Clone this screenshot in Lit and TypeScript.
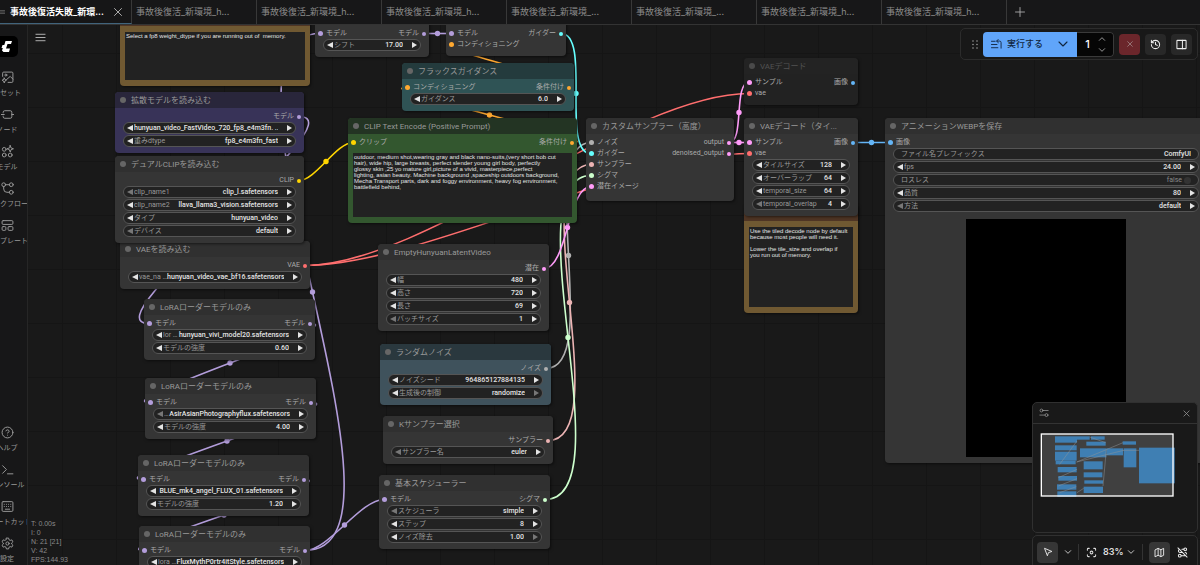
import { LitElement, html, css, svg, nothing } from "lit";
import { classMap } from "lit/directives/class-map.js";
import { styleMap } from "lit/directives/style-map.js";

type Kind = "combo" | "number" | "text" | "toggle";
interface Slot { label: string; color: string }
interface Widget {
  label: string;
  value: string;
  kind: Kind;
  name?: string;
  atMin?: boolean;
  atMax?: boolean;
}
interface GraphNode {
  id: string;
  title: string;
  x: number;
  y: number;
  w: number;
  theme?: string;
  inputs?: Slot[];
  outputs?: Slot[];
  widgets?: Widget[];
  text?: string;
  textHeight?: number;
  preview?: boolean;
  roomy?: boolean;
}

const C = {
  model: "#b39ddb",
  clip: "#ffd500",
  vae: "#ff6e6e",
  cond: "#ffa931",
  latent: "#ff9cf9",
  image: "#64b5f6",
  guider: "#66ffff",
  noise: "#b0b0b0",
  sampler: "#ecb4b4",
  sigmas: "#cdffcd",
};

const TITLE_H = 16;
const BODY_PAD = 3;
const SLOT_H = 11;

const combo = (label: string, value: string, extra: Partial<Widget> = {}): Widget => ({ label, value, kind: "combo", ...extra });
const num = (label: string, value: string, extra: Partial<Widget> = {}): Widget => ({ label, value, kind: "number", ...extra });
const s = (label: string, color: string): Slot => ({ label, color });

const lora = (id: string, x: number, y: number, w: number, file: Widget, strength: string): GraphNode => ({
  id, x, y, w,
  title: "LoRAローダーモデルのみ",
  inputs: [s("モデル", C.model)],
  outputs: [s("モデル", C.model)],
  widgets: [file, num("モデルの強度", strength)],
});

const NODES: GraphNode[] = [
  {
    id: "note1", title: "Note", x: 120, y: 10, w: 190, theme: "brown", textHeight: 48,
    text: "Select a fp8 weight_dtype if you are running out of  memory.",
  },
  {
    id: "unet", title: "拡散モデルを読み込む", x: 115, y: 92, w: 189, theme: "purple",
    outputs: [s("モデル", C.model)],
    widgets: [
      combo("", "hunyuan_video_FastVideo_720_fp8_e4m3fn. ...", { name: "unet_name" }),
      combo("重みdtype", "fp8_e4m3fn_fast"),
    ],
  },
  {
    id: "vae", title: "VAEを読み込む", x: 120, y: 241, w: 190,
    outputs: [s("VAE", C.vae)],
    widgets: [combo("vae_na …", "hunyuan_video_vae_bf16.safetensors")],
  },
  {
    id: "clip", title: "デュアルCLIPを読み込む", x: 115, y: 156, w: 189,
    outputs: [s("CLIP", C.clip)],
    widgets: [
      combo("clip_name1", "clip_l.safetensors", { atMin: true }),
      combo("clip_name2", "llava_llama3_vision.safetensors"),
      combo("タイプ", "hunyuan_video"),
      combo("デバイス", "default", { atMin: true }),
    ],
  },
  lora("lora1", 144, 299, 171, combo("lor …", "hunyuan_vivi_model20.safetensors"), "0.60"),
  lora("lora2", 145, 378, 171, combo("…", "AsirAsianPhotographyflux.safetensors", { atMin: true }), "4.00"),
  lora("lora3", 138, 455, 171, combo("", "BLUE_mk4_angel_FLUX_01.safetensors", { name: "lora_name" }), "1.20"),
  lora("lora4", 139, 526, 171, combo("lora …", "FluxMythP0rtr4itStyle.safetensors"), "1.00"),
  {
    id: "shift", title: "モデルサンプリングSD3", x: 315, y: 9, w: 114,
    inputs: [s("モデル", C.model)],
    outputs: [s("モデル", C.model)],
    widgets: [num("シフト", "17.00")],
  },
  {
    id: "guider", title: "基本ガイダー", x: 446, y: 9, w: 120,
    inputs: [s("モデル", C.model), s("コンディショニング", C.cond)],
    outputs: [s("ガイダー", C.guider)],
  },
  {
    id: "flux", title: "フラックスガイダンス", x: 402, y: 63, w: 172, theme: "teal",
    inputs: [s("コンディショニング", C.cond)],
    outputs: [s("条件付け", C.cond)],
    widgets: [num("ガイダンス", "6.0")],
  },
  {
    id: "prompt", title: "CLIP Text Encode (Positive Prompt)", x: 348, y: 118, w: 229, theme: "green", textHeight: 64,
    inputs: [s("クリップ", C.clip)],
    outputs: [s("条件付け", C.cond)],
    text:
      "outdoor, medium shot,wearing gray and black nano-suits,(very short bob cut\n" +
      "hair), wide hip, large breasts, perfect slender young girl body, perfectly\n" +
      "glossy skin ,25 yo mature girl,picture of a vivid, masterpiece,perfect\n" +
      "lighting, asian beauty. Machine background ,spaceship outdoors background,\n" +
      "Mecha Transport parts, dark and foggy environment, heavy fog environment,\n" +
      "battlefield behind,",
  },
  {
    id: "empty", title: "EmptyHunyuanLatentVideo", x: 378, y: 244, w: 171,
    outputs: [s("潜在", C.latent)],
    widgets: [num("幅", "480"), num("高さ", "720"), num("長さ", "69"), num("バッチサイズ", "1", { atMin: true })],
  },
  {
    id: "noise", title: "ランダムノイズ", x: 380, y: 344, w: 171, theme: "blue",
    outputs: [s("ノイズ", C.noise)],
    widgets: [num("ノイズシード", "964865127884135"), combo("生成後の制御", "randomize", { atMax: true })],
  },
  {
    id: "ksampler", title: "Kサンプラー選択", x: 383, y: 416, w: 170,
    outputs: [s("サンプラー", C.sampler)],
    widgets: [combo("サンプラー名", "euler", { atMin: true })],
  },
  {
    id: "sched", title: "基本スケジューラー", x: 379, y: 475, w: 171,
    inputs: [s("モデル", C.model)],
    outputs: [s("シグマ", C.sigmas)],
    widgets: [combo("スケジューラ", "simple", { atMin: true }), num("ステップ", "8"), num("ノイズ除去", "1.00", { atMax: true })],
  },
  {
    id: "custom", title: "カスタムサンプラー（高度）", x: 586, y: 118, w: 148, roomy: true,
    inputs: [s("ノイズ", C.noise), s("ガイダー", C.guider), s("サンプラー", C.sampler), s("シグマ", C.sigmas), s("潜在イメージ", C.latent)],
    outputs: [s("output", C.latent), s("denoised_output", C.latent)],
  },
  {
    id: "decode", title: "VAEデコード", x: 744, y: 58, w: 114, theme: "muted",
    inputs: [s("サンプル", C.latent), s("vae", C.vae)],
    outputs: [s("画像", C.image)],
  },
  {
    id: "note2", title: "Note", x: 744, y: 205, w: 114, theme: "brown", textHeight: 80,
    text: "Use the tiled decode node by default\nbecause most people will need it.\n\nLower the tile_size and overlap if\nyou run out of memory.",
  },
  {
    id: "tiled", title: "VAEデコード（タイ...", x: 744, y: 118, w: 114,
    inputs: [s("サンプル", C.latent), s("vae", C.vae)],
    outputs: [s("画像", C.image)],
    widgets: [num("タイルサイズ", "128"), num("オーバーラップ", "64"), num("temporal_size", "64"), num("temporal_overlap", "4", { atMin: true })],
  },
  {
    id: "webp", title: "アニメーションWEBPを保存", x: 885, y: 118, w: 322, preview: true,
    inputs: [s("画像", C.image)],
    widgets: [
      { kind: "text", label: "ファイル名プレフィックス", value: "ComfyUI" },
      num("fps", "24.00"),
      { kind: "toggle", label: "ロスレス", value: "false" },
      num("品質", "80"),
      combo("方法", "default", { atMin: true }),
    ],
  },
];

const LINKS: [string, number, string, number, string][] = [
  ["unet", 0, "lora1", 0, C.model],
  ["lora1", 0, "lora2", 0, C.model],
  ["lora2", 0, "lora3", 0, C.model],
  ["lora3", 0, "lora4", 0, C.model],
  ["lora4", 0, "shift", 0, C.model],
  ["lora4", 0, "sched", 0, C.model],
  ["shift", 0, "guider", 0, C.model],
  ["clip", 0, "prompt", 0, C.clip],
  ["vae", 0, "decode", 1, C.vae],
  ["vae", 0, "tiled", 1, C.vae],
  ["prompt", 0, "flux", 0, C.cond],
  ["flux", 0, "guider", 1, C.cond],
  ["noise", 0, "custom", 0, C.noise],
  ["ksampler", 0, "custom", 2, C.sampler],
  ["sched", 0, "custom", 3, C.sigmas],
  ["empty", 0, "custom", 4, C.latent],
  ["guider", 0, "custom", 1, C.guider],
  ["custom", 0, "decode", 0, C.latent],
  ["custom", 0, "tiled", 0, C.latent],
  ["tiled", 0, "webp", 0, C.image],
];

const byId = new Map(NODES.map((n) => [n.id, n]));
const slotY = (n: GraphNode, i: number) => n.y + TITLE_H + BODY_PAD + SLOT_H * (i + 0.5);

const icon = (size: number, body: unknown, width = 2) => html`<svg
  width=${size} height=${size} viewBox="0 0 24 24" fill="none" stroke="currentColor"
  stroke-width=${width} stroke-linecap="round" stroke-linejoin="round" aria-hidden="true">${body}</svg>`;

const I = {
  close: svg`<path d="M5 5l14 14M19 5L5 19"/>`,
  plus: svg`<path d="M12 3v18M3 12h18"/>`,
  menu: svg`<path d="M2 5h20M2 12h20M2 19h20"/>`,
  assets: svg`<path d="M3 10V4a2 2 0 0 1 2-2h15a2 2 0 0 1 2 2v15a2 2 0 0 1-2 2h-7"/><path d="M22 15l-5-5-7 6"/><circle cx="9" cy="7.500" r="1.800"/><path d="M6 13l1.300 2.700L10 17l-2.700 1.300L6 22l-1.300-3.700L2 17l2.700-1.300z"/>`,
  node: svg`<path d="M4 9V8a3 3 0 0 1 3-3h10a3 3 0 0 1 3 3v8a3 3 0 0 1-3 3H7a3 3 0 0 1-3-3v-1"/><path d="M0 12h6M20 12h4"/>`,
  model: svg`<circle cx="6" cy="8" r="3.500"/><circle cx="6" cy="18.500" r="3.500"/><circle cx="17" cy="18.500" r="3.500"/><path d="M17 1l1.600 4.400L23 7l-4.400 1.600L17 13l-1.600-4.400L11 7l4.400-1.600z"/>`,
  workflow: svg`<circle cx="5" cy="5" r="3.500"/><circle cx="19" cy="5" r="3.500"/><circle cx="19" cy="19" r="3.500"/><path d="M5 8.500V13a6 6 0 0 0 6 6h4.500M8.500 5h7"/>`,
  template: svg`<rect x="2" y="3" width="20" height="7" rx="2"/><rect x="2" y="14" width="7" height="7" rx="2"/><rect x="13" y="14" width="9" height="7" rx="2"/>`,
  help: svg`<circle cx="12" cy="12" r="10"/><path d="M9.090 9a3 3 0 0 1 5.830 1c0 2-3 3-3 3M12 17h.01"/>`,
  console: svg`<path d="M3 5l7 7-7 7M12 20h10"/>`,
  keyboard: svg`<rect x="2" y="3" width="20" height="18" rx="2"/><path d="M6 8h.1M10 8h.1M14 8h.1M18 8h.1M6 12h.1M10 12h.1M14 12h.1M18 12h.1M8 17h8"/>`,
  gear: svg`<path d="M10 2h4l.7 3 2.300 1.300 3-1 2 3.500L19.700 11v2l2.300 2.200-2 3.500-3-1-2.300 1.300-.7 3h-4l-.7-3L7 17.700l-3 1-2-3.500L4.300 13v-2L2 8.800l2-3.500 3 1L9.300 5z"/><circle cx="12" cy="12" r="3"/>`,
  run: svg`<path d="M1 5h8M1 12h12M1 19h14M16 8l-4-3.500L16 1M22 20V8a3.500 3.500 0 0 0-3.500-3.500H13"/>`,
  down: svg`<path d="M4 8l8 8 8-8"/>`,
  up: svg`<path d="M4 16l8-8 8 8"/>`,
  history: svg`<path d="M3 12a9 9 0 1 0 9-9 9.750 9.750 0 0 0-6.740 2.740L3 8M3 3v5h5M12 7v5l4 2"/>`,
  panel: svg`<rect x="2" y="3" width="20" height="18" rx="1"/><path d="M14 3v18"/>`,
  cursor: svg`<path d="M4 4l6.500 17 2.500-7.500L20.500 11z"/>`,
  focus: svg`<path d="M3 7V5a2 2 0 0 1 2-2h2M17 3h2a2 2 0 0 1 2 2v2M21 17v2a2 2 0 0 1-2 2h-2M7 21H5a2 2 0 0 1-2-2v-2"/><circle cx="12" cy="12" r="3"/>`,
  map: svg`<path d="M3 6l6-3 6 3 6-3v15l-6 3-6-3-6 3zM9 3v15M15 6v15"/>`,
  hidden: svg`<circle cx="6" cy="19" r="3"/><path d="M9 19h8.500c.4 0 .9-.1 1.300-.2M5.200 5.200A3.500 3.530 0 0 0 6.500 12H12M2 2l20 20M21 15.300a3.500 3.500 0 0 0-3.300-3.300M15 5h-4.300"/><circle cx="18" cy="5" r="3"/>`,
  options: svg`<circle cx="6" cy="6" r="3.500"/><path d="M10 6h12M2 17h12"/><circle cx="18" cy="17" r="3.500"/>`,
};

class GraphNodeView extends LitElement {
  static properties = { node: { attribute: false } };
  declare node: GraphNode;

  static styles = css`
    :host {
      display: block;
      --head: #303030;
      --body: #353535;
    }
    .card {
      border-radius: 4px;
      background: var(--body);
      box-shadow: 1px 1px 3px #0008;
      color: #aaa;
      font: 7px/11px Roboto, "Noto Sans CJK JP", sans-serif;
      overflow: hidden;
    }
    .purple { --head: #29263b; --body: #383358; }
    .brown { --head: #4f3524; --body: #705932; }
    .teal { --head: #243b3d; --body: #2f5355; }
    .green { --head: #233423; --body: #33572f; }
    .blue { --head: #2a383e; --body: #3f525c; }
    .muted { --head: #232323; --body: #222; }
    .head {
      display: flex;
      align-items: center;
      gap: 5px;
      height: 16px;
      padding-left: 5px;
      background: var(--head);
      color: #999;
      font-size: 8px;
      white-space: nowrap;
    }
    .muted .head { color: #525252; }
    .bulb { width: 6px; height: 6px; border-radius: 50%; background: #666; flex: none; }
    .muted .bulb { background: #4a4a4a; }
    .body { padding: 3px 0 6px; }
    .slots { display: flex; justify-content: space-between; }
    .slot { display: flex; align-items: center; gap: 3px; height: 11px; white-space: nowrap; }
    .in { padding-left: 3px; }
    .out { padding-right: 3px; justify-content: flex-end; }
    .dot { width: 5px; height: 5px; border-radius: 50%; flex: none; }
    .out .dot { width: 4px; height: 4px; }
    .widgets { display: grid; gap: 1px; padding: 0 8px; }
    .widget {
      display: flex;
      align-items: center;
      box-sizing: border-box;
      height: 12px;
      padding: 0 3px;
      border: 1px solid #555;
      border-radius: 6px;
      background: #222;
    }
    .plain { padding: 0 7px; }
    .field { display: flex; align-items: center; flex: 1; min-width: 0; padding: 0 9px 0 1px; }
    .plain .field { padding: 0; gap: 2px; }
    .name { color: #999; white-space: nowrap; flex: none; }
    input, select {
      flex: 1;
      min-width: 0;
      width: 0;
      height: 10px;
      margin: 0;
      padding: 0;
      border: 0;
      background: none;
      color: #e4e4e4;
      font: 500 7px/10px Roboto, "Noto Sans CJK JP", sans-serif;
      text-align: right;
      text-align-last: right;
      appearance: none;
      outline: none;
    }
    .state { flex: 1; text-align: right; color: #888; }
    .tick { flex: none; width: 7px; height: 7px; border-radius: 50%; background: #333; }
    .step { display: flex; flex: none; padding: 0; border: 0; background: none; color: #e4e4e4; }
    .step:disabled { color: #777; }
    .note { padding: 5px 5px 0; }
    .body.only { padding: 6px 0; }
    .only .note { padding: 0 5px; }
    textarea {
      display: block;
      box-sizing: border-box;
      width: 100%;
      margin: 0;
      padding: 1px;
      border: 0;
      resize: none;
      overflow: hidden;
      background: #222;
      color: #e4e4e4;
      font: 6px/6px "Liberation Sans", Arial, sans-serif;
      white-space: pre;
      outline: none;
    }
    .preview { display: grid; justify-content: center; padding-top: 7px; }
    .frame { width: 160px; height: 238px; background: #000; }
    .roomy { padding-bottom: 9px; }
  `;

  private widget(w: Widget, i: number) {
    const id = `w${i}`;
    const name = w.label ? html`<label class="name" for=${id}>${w.label}</label>` : nothing;
    if (w.kind === "text") {
      return html`<div class="widget plain"><div class="field">${name}<input id=${id} type="text" .value=${w.value} /></div></div>`;
    }
    if (w.kind === "toggle") {
      return html`<div class="widget plain"><div class="field">${name}<span class="state">${w.value}</span><input id=${id} class="tick" type="checkbox" /></div></div>`;
    }
    const control = w.kind === "combo"
      ? html`<select id=${id} aria-label=${w.name ?? w.label}><option>${w.value}</option></select>`
      : html`<input id=${id} type="text" inputmode="decimal" .value=${w.value} />`;
    return html`<div class="widget">
      <button class="step" ?disabled=${w.atMin} aria-label="前へ"><svg width="6" height="6" viewBox="0 0 6 6"><path d="M6 0v6L0 3z" fill="currentColor"/></svg></button>
      <div class="field">${name}${control}</div>
      <button class="step" ?disabled=${w.atMax} aria-label="次へ"><svg width="5" height="6" viewBox="0 0 5 6"><path d="M0 0v6l5-3z" fill="currentColor"/></svg></button>
    </div>`;
  }

  render() {
    const n = this.node;
    const only = !n.inputs && !n.outputs;
    return html`<article class="card ${n.theme ?? ""}">
      <header class="head"><span class="bulb"></span>${n.title}</header>
      <div class=${classMap({ body: true, only, roomy: !!n.roomy })}>
        ${only ? nothing : html`<div class="slots">
          <div>${(n.inputs ?? []).map((p) => html`<div class="slot in"><span class="dot" style=${styleMap({ background: p.color })}></span>${p.label}</div>`)}</div>
          <div>${(n.outputs ?? []).map((p) => html`<div class="slot out">${p.label}<span class="dot" style=${styleMap({ background: p.color })}></span></div>`)}</div>
        </div>`}
        ${n.widgets ? html`<div class="widgets">${n.widgets.map((w, i) => this.widget(w, i))}</div>` : nothing}
        ${n.text ? html`<div class="note"><textarea aria-label=${n.title} spellcheck="false" style=${styleMap({ height: `${n.textHeight}px` })} .value=${n.text}></textarea></div>` : nothing}
        ${n.preview ? html`<div class="preview"><div class="frame"></div></div>` : nothing}
      </div>
    </article>`;
  }
}
customElements.define("graph-node", GraphNodeView);

const TABS = [
  "事故後復活失敗_新環...",
  "事故後復活_新環境_h...",
  "事故後復活_新環境_h...",
  "事故後復活_新環境_h...",
  "事故後復活_新環境_...",
  "事故後復活_新環境_...",
  "事故後復活_新環境_h...",
  "事故後復活_新環境_h...",
];

const SIDE_TOP: [unknown, string][] = [
  [I.assets, "アセット"], [I.node, "ノード"], [I.model, "モデル"], [I.workflow, "ワークフロー"], [I.template, "テンプレート"],
];
const SIDE_BOTTOM: [unknown, string][] = [
  [I.help, "ヘルプ"], [I.console, "コンソール"], [I.keyboard, "ショートカット"], [I.gear, "設定"],
];

const MAP_RECTS = [
  [166, 141, 66, 19], [232, 141, 38, 10], [274, 141, 41, 10], [260, 157, 58, 12], [166, 168, 65, 15],
  [166, 187, 65, 27], [168, 214, 60, 11], [241, 177, 79, 27], [320, 177, 50, 21], [369, 156, 40, 10],
  [372, 177, 38, 57], [418, 175, 107, 107], [174, 233, 57, 16], [176, 260, 56, 14], [172, 285, 58, 16],
  [173, 306, 57, 16], [252, 216, 57, 24], [252, 249, 56, 15], [254, 273, 56, 10], [252, 292, 58, 19],
];

class AppRoot extends LitElement {
  static styles = css`
    :host {
      display: block;
      position: relative;
      height: 100vh;
      overflow: hidden;
      background: #191919;
      color: #bbb;
      font: 9px/14px Inter, "Noto Sans CJK JP", sans-serif;
    }
    button { padding: 0; border: 0; background: none; color: inherit; font: inherit; display: grid; place-items: center; }
    svg { display: block; }
    .canvas {
      position: absolute;
      inset: 0;
      overflow: hidden;
      background-image: linear-gradient(#151515 1px, transparent 1px), linear-gradient(90deg, #151515 1px, transparent 1px);
      background-size: 54px 54px;
      background-position: 8px 53px;
    }
    .links { position: absolute; inset: 0; width: 100%; height: 100%; }
    graph-node { position: absolute; }
    .shell { position: relative; display: flex; flex-direction: column; height: 100%; pointer-events: none; }
    .shell button, .shell input, .shell a { pointer-events: auto; }

    .tabs { display: flex; flex: none; height: 24px; background: #171718; border-bottom: 1px solid #333; overflow: hidden; }
    .tab {
      display: flex;
      align-items: center;
      justify-content: space-between;
      box-sizing: border-box;
      flex: none;
      width: 125px;
      height: 24px;
      padding: 0 4px;
      border-right: 1px solid #383838;
      color: #8a8a8a;
      white-space: nowrap;
    }
    .tab a { color: inherit; text-decoration: none; }
    .active { width: 132px; padding: 0 7px 0 0; background: #161617; border-bottom: 1px solid #41647c; color: #fff; font-weight: 600; }
    .active button { color: #bbb; }
    .lead { flex: none; width: 10px; overflow: hidden; color: #aaa; display: flex; justify-content: flex-end; padding-right: 5px; box-sizing: border-box; }
    .active a { flex: 1; }
    .add { width: 26px; color: #aaa; }

    .main { display: flex; flex: 1; min-height: 0; }
    .side {
      display: flex;
      flex-direction: column;
      justify-content: space-between;
      box-sizing: border-box;
      flex: none;
      width: 28px;
      padding-top: 11px;
      background: #171718;
      border-right: 1px solid #262626;
      overflow: hidden;
      color: #999;
    }
    .group { display: grid; grid-template-columns: minmax(0, 1fr); margin-left: -13px; }
    .bottom { margin-bottom: -3px; }
    .logo { width: 31px; height: 21px; margin-bottom: 8px; border-radius: 5px; background: #000; display: flex; justify-content: flex-end; align-items: center; box-sizing: border-box; padding-right: 5px; }
    .item { display: flex; flex-direction: column; align-items: center; justify-content: center; gap: 5px; height: 37px; font-size: 7px; line-height: 8px; white-space: nowrap; }

    .stage { flex: 1; display: flex; justify-content: space-between; min-width: 0; }
    .left { display: flex; flex-direction: column; justify-content: space-between; align-items: flex-start; }
    .burger { margin: 7px 0 0 7px; color: #bbb; }
    .stats { margin: 0 0 0 3px; padding-bottom: 1px; color: #8a8a8a; font: 7px/9px "Liberation Sans", Arial, sans-serif; }
    .right { display: flex; flex-direction: column; justify-content: space-between; align-items: flex-end; padding: 3px 2px 0 0; }
    .bar {
      display: flex;
      align-items: center;
      gap: 5px;
      box-sizing: border-box;
      height: 32px;
      padding: 0 5px 0 11px;
      border: 1px solid #2c2c2c;
      border-radius: 5px;
      background: #181818;
    }
    .queue { display: flex; height: 25px; border-radius: 4px; overflow: hidden; }
    .run { display: flex; align-items: center; gap: 5px; padding: 0 6px 0 8px; background: #60a5fa; color: #10263f; font-weight: 500; }
    .more { width: 28px; background: #60a5fa; color: #10263f; }
    .count { display: flex; align-items: center; box-sizing: border-box; width: 37px; border: 1px solid #3a3a3a; border-left: 0; border-radius: 0 4px 4px 0; background: #060606; }
    .count input { width: 21px; padding: 0; border: 0; background: none; color: #fff; font: 500 11px/14px Inter, sans-serif; text-align: center; outline: none; }
    .spin { display: grid; gap: 3px; color: #bbb; }
    .sq { width: 21px; height: 21px; border-radius: 4px; background: #282828; color: #eee; }
    .stop { background: #6b262b; color: #a99; }
    .pair { display: flex; gap: 2px; }

    .map { box-sizing: border-box; width: 166px; margin-bottom: 2px; border: 1px solid #303030; border-radius: 5px; background: #191919; overflow: hidden; color: #999; }
    .maphead { display: flex; justify-content: space-between; align-items: center; height: 20px; padding: 0 6px; border-bottom: 1px solid #333; }
    .tools { display: flex; align-items: center; justify-content: space-between; box-sizing: border-box; width: 166px; height: 34px; margin-bottom: -4px; padding: 0 4px; border: 1px solid #303030; border-radius: 5px; background: #181818; color: #ddd; }
    .on { background: #363636; }
    .flat { background: none; }
    .rule { width: 1px; height: 16px; background: #333; }
    .zoom { display: flex; align-items: center; gap: 4px; font-weight: 600; }
  `;

  private link([from, out, to, inp, color]: [string, number, string, number, string]) {
    const a = byId.get(from)!;
    const b = byId.get(to)!;
    const x1 = a.x + a.w - 5;
    const y1 = slotY(a, out);
    const x2 = b.x + 5;
    const y2 = slotY(b, inp);
    const off = Math.hypot(x2 - x1, y2 - y1) * 0.25;
    return svg`<path d="M${x1} ${y1}C${x1 + off} ${y1} ${x2 - off} ${y2} ${x2} ${y2}" fill="none" stroke=${color} stroke-width="1.600"/>
      <circle cx=${(x1 + x2) / 2} cy=${(y1 + y2) / 2} r="2.700" fill=${color}/>`;
  }

  private side(items: [unknown, string][]) {
    return items.map(([i, label]) => html`<button class="item">${icon(13, i, 1.8)}<span>${label}</span></button>`);
  }

  render() {
    return html`
      <section class="canvas" aria-label="ワークフロー">
        <svg class="links">${LINKS.map((l) => this.link(l))}</svg>
        ${NODES.map((n) => html`<graph-node .node=${n} style=${styleMap({ left: `${n.x}px`, top: `${n.y}px`, width: `${n.w}px` })}></graph-node>`)}
      </section>
      <div class="shell">
        <nav class="tabs">
          ${TABS.map((t, i) => i === 0
            ? html`<div class="tab active"><span class="lead">${icon(10, I.menu)}</span><a href="#tab-0">${t}</a><button aria-label="閉じる">${icon(12, I.close, 1.8)}</button></div>`
            : html`<div class="tab"><a href="#tab-${i}">${t}</a></div>`)}
          <button class="add" aria-label="新規">${icon(12, I.plus, 1.8)}</button>
        </nav>
        <div class="main">
          <aside class="side">
            <div class="group">
              <div class="logo"><svg width="12" height="13" viewBox="0 0 12 13"><path d="M4.500 1H11l-1 3H6.500L5 8.500h4L8 12H2.500L1 10.500 1.800 8H.5l1-3h1.800z" fill="#fff"/></svg></div>
              ${this.side(SIDE_TOP)}
            </div>
            <div class="group bottom">${this.side(SIDE_BOTTOM)}</div>
          </aside>
          <div class="stage">
            <div class="left">
              <button class="burger" aria-label="メニュー">${icon(11, I.menu)}</button>
              <div class="stats"><div>T: 0.00s</div><div>I: 0</div><div>N: 21 [21]</div><div>V: 42</div><div>FPS:144.93</div></div>
            </div>
            <div class="right">
              <div class="bar">
                <svg width="6" height="9" viewBox="0 0 6 9" fill="#999"><circle cx="1" cy="1" r=".8"/><circle cx="5" cy="1" r=".8"/><circle cx="1" cy="4.500" r=".8"/><circle cx="5" cy="4.500" r=".8"/><circle cx="1" cy="8" r=".8"/><circle cx="5" cy="8" r=".8"/></svg>
                <div class="queue">
                  <button class="run">${icon(11, I.run)}<span>実行する</span></button>
                  <button class="more" aria-label="実行オプション">${icon(12, I.down, 2.2)}</button>
                  <div class="count">
                    <input type="text" inputmode="numeric" aria-label="バッチ数" value="1" />
                    <div class="spin"><button aria-label="増やす">${icon(8, I.up, 2.4)}</button><button aria-label="減らす">${icon(8, I.down, 2.4)}</button></div>
                  </div>
                </div>
                <button class="sq stop" aria-label="中断">${icon(8, I.close)}</button>
                <button class="sq" aria-label="履歴">${icon(11, I.history, 2.2)}</button>
                <button class="sq" aria-label="パネル">${icon(11, I.panel, 2.2)}</button>
              </div>
              <div>
                <div class="map">
                  <div class="maphead"><button aria-label="ミニマップ設定">${icon(10, I.options, 1.8)}</button><button aria-label="閉じる">${icon(9, I.close)}</button></div>
                  <svg width="164" height="108" viewBox="100 104 492 324">
                    <rect x="125" y="134" width="395" height="186" fill="#404040"/>
                    ${MAP_RECTS.map(([x, y, w, h]) => svg`<rect x=${x} y=${y} width=${w} height=${h} fill="#3f7fb3"/>`)}
                    <path d="M231 218L370 160M231 218L372 183M270 143L318 160M180 225L232 155M320 180L310 290M176 265L232 240M176 290L232 268M180 310L230 292M232 310L252 297M370 183H418" stroke="#8f9498" stroke-width="1.500" fill="none"/>
                    <rect x="125" y="134" width="395" height="186" fill="none" stroke="#fff" stroke-width="4"/>
                  </svg>
                </div>
                <div class="tools">
                  <button class="sq on" aria-label="選択">${icon(10, I.cursor, 2.2)}</button>
                  <button aria-label="選択モード">${icon(8, I.down, 2.6)}</button>
                  <span class="rule"></span>
                  <button aria-label="ビューに合わせる">${icon(11, I.focus, 2.2)}</button>
                  <button class="zoom">83% ${icon(8, I.down, 2.6)}</button>
                  <span class="rule"></span>
                  <div class="pair">
                    <button class="sq on" aria-label="ミニマップ">${icon(11, I.map)}</button>
                    <button class="sq flat" aria-label="リンク表示">${icon(11, I.hidden, 2.2)}</button>
                  </div>
                </div>
              </div>
            </div>
          </div>
        </div>
      </div>`;
  }
}
customElements.define("app-root", AppRoot);
